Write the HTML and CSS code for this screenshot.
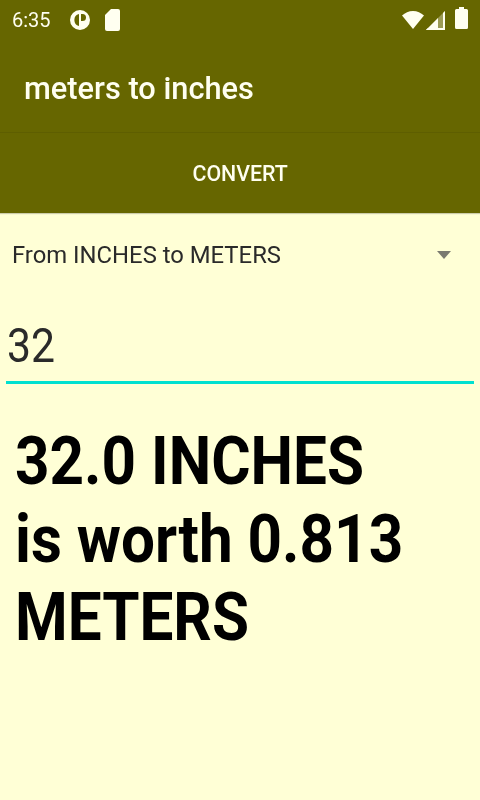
FILE: index.html
```html
<!DOCTYPE html>
<html lang="en">
<head>
<meta charset="utf-8">
<title>meters to inches</title>
<link rel="stylesheet" href="styles.css">
</head>
<body>
<header class="top">
  <div class="status">
    <span class="time">6:35</span>
    <svg class="ic-p" viewBox="0 0 20 20"><path fill="#fffff0" fill-rule="evenodd" d="M10 0a10 10 0 1 0 0 20a10 10 0 0 0 0-20zM9 4v12a6.200 6.200 0 0 1 0-12zM11 4h1.500a3.500 3.500 0 0 1 0 7H11z"/></svg>
    <svg class="ic-sd" viewBox="0 0 15 22"><path fill="#fffff0" d="M6 0h7a2 2 0 0 1 2 2v18a2 2 0 0 1-2 2H2a2 2 0 0 1-2-2V6z"/></svg>
    <span class="spacer"></span>
    <svg class="ic-wifi" viewBox="0 0 22 18"><path fill="#fffff0" d="M11 18L0 4.500C3 1.800 6.800 0 11 0s8 1.800 11 4.500z"/></svg>
    <svg class="ic-signal" viewBox="0 0 19 19"><path fill="#fffff0" fill-opacity=".35" d="M19 0v19H0z"/><path fill="#fffff0" d="M12 7v12H0zM19 0v19h-2V2z"/><path fill="#fffff0" d="M0 19h19v-2H2z"/></svg>
    <svg class="ic-batt" viewBox="0 0 13 22"><path fill="#fffff0" d="M4 0h5v2h2.500A1.500 1.500 0 0 1 13 3.500V20.500A1.500 1.500 0 0 1 11.500 22H1.500A1.500 1.500 0 0 1 0 20.500V3.500A1.500 1.500 0 0 1 1.500 2H4z"/></svg>
  </div>
  <h1 class="title"><span class="title-text">meters to inches</span></h1>
  <button class="convert" type="button"><span class="convert-text">CONVERT</span></button>
</header>
<main class="content">
  <div class="spinner">
    <span class="spinner-text">From INCHES to METERS</span>
    <span class="arrow"></span>
  </div>
  <div class="field"><span class="field-text">32</span></div>
  <p class="result">32.0 INCHES<br>is worth 0.813<br>METERS</p>
</main>
</body>
</html>
```
FILE: styles.css
```css
* { box-sizing: border-box; }
html, body { margin: 0; height: 100%; }
body {
  width: 480px;
  height: 800px;
  overflow: hidden;
  background: #ffffd6;
  font-family: Roboto, "Liberation Sans", sans-serif;
  display: flex;
  flex-direction: column;
}
.top {
  background: #666600;
  color: #fffff0;
  height: 213px;
  flex: none;
  display: flex;
  flex-direction: column;
  box-shadow: 0 1px 1px rgba(0,0,0,.2);
}
.status {
  height: 40px;
  display: flex;
  align-items: center;
  padding: 0 12px;
  font-size: 20px;
  filter: blur(.5px);
}
.time { width: 58px; }
.ic-p { width: 20px; height: 20px; margin-right: 15px; }
.ic-sd { width: 15px; height: 22px; }
.spacer { flex: 1; }
.ic-wifi { width: 22px; height: 18px; margin-right: 2px; }
.ic-signal { width: 19px; height: 19px; margin-right: 10px; }
.ic-batt { width: 13px; height: 22px; margin-bottom: 5px; }
.title {
  margin: 0;
  height: 93px;
  padding: 4px 24px 0;
  display: flex;
  align-items: center;
  font-size: 32px;
  font-weight: 500;
  border-bottom: 1px solid #5e5e00;
}
.title-text {
  display: inline-block;
  transform: scaleX(.962);
  transform-origin: left;
  filter: blur(.5px);
}
.convert {
  flex: 1;
  background: none;
  border: 0;
  color: inherit;
  font: 500 22px Roboto, sans-serif;
  padding: 0;
}
.convert-text {
  display: inline-block;
  transform: scaleX(.97);
  filter: blur(.5px);
}
.content { flex: 1; }
.spinner {
  height: 84px;
  display: flex;
  align-items: center;
  justify-content: space-between;
  padding: 0 28px 0 12px;
  font-size: 24px;
  color: #2a2a2a;
}
.spinner-text {
  display: inline-block;
  transform: scaleX(.993);
  transform-origin: left;
  filter: blur(.5px);
}
.arrow {
  width: 0;
  height: 0;
  border-left: 7px solid transparent;
  border-right: 7px solid transparent;
  border-top: 8px solid #7a7a70;
  margin-right: 1px;
}
.field {
  margin: 0 6px;
  height: 87px;
  padding: 17px 1px 0;
  font-size: 48px;
  line-height: 64px;
  color: #2a2a2a;
  border-bottom: 3px solid #00e0d0;
}
.field-text {
  display: inline-block;
  transform: scaleX(.89);
  transform-origin: left;
  filter: blur(.5px);
}
.result {
  margin: 0;
  padding: 39px 16.5px 0;
  font-size: 66px;
  line-height: 78px;
  font-weight: 700;
  color: #000;
  width: 480px;
  white-space: nowrap;
  transform: scaleX(.912);
  transform-origin: left;
  filter: blur(.5px);
}
```
